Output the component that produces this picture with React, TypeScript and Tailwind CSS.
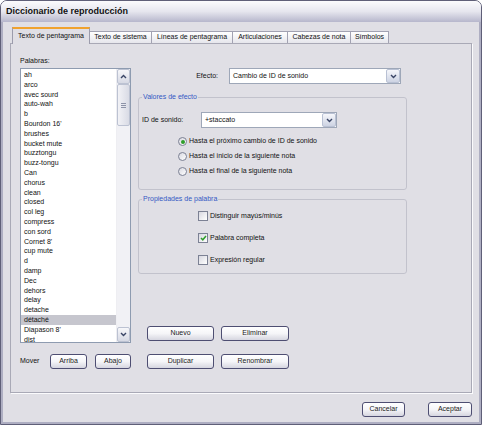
import React from 'react';

const WORDS = ['ah', 'arco', 'avec sourd', 'auto-wah', 'b', "Bourdon 16'", 'brushes', 'bucket mute', 'buzztongu', 'buzz-tongu', 'Can', 'chorus', 'clean', 'closed', 'col leg', 'compress', 'con sord', "Cornet 8'", 'cup mute', 'd', 'damp', 'Dec', 'dehors', 'delay', 'detache', 'détaché', "Diapason 8'", 'dist'];

const TABS: [string, string][] = [
  ['Texto de pentagrama', 'w-[78px]'],
  ['Texto de sistema', 'w-[62px]'],
  ['Líneas de pentagrama', 'w-[81px]'],
  ['Articulaciones', 'w-[55px]'],
  ['Cabezas de nota', 'w-[63px]'],
  ['Símbolos', 'w-[38px]'],
];

function Chevron({ up }: { up?: boolean }) {
  return (
    <svg width="7" height="5" viewBox="0 0 7 5">
      <path d={up ? 'M1 4L3.5 1.5L6 4' : 'M1 1L3.5 3.5L6 1'} fill="none" stroke="#3a4566" strokeWidth="1.4" />
    </svg>
  );
}

function Btn({ children, w }: { children: React.ReactNode; w: string }) {
  return (
    <div className={`${w} h-[15px] flex items-center justify-center rounded-[3px] border border-[#4e4e72] bg-gradient-to-b from-white via-[#f5f5f8] to-[#d6d6e0] text-[#222]`}>
      {children}
    </div>
  );
}

function Combo({ w, value }: { w: string; value: string }) {
  return (
    <div className={`${w} h-[16px] flex bg-white border border-[#9ea7b8]`}>
      <div className="flex-1 flex items-center pl-[3px]">{value}</div>
      <div className="w-[14px] flex items-center justify-center rounded-[2px] border border-[#b9c1d4] bg-gradient-to-b from-[#f6f7fb] to-[#cdd3e3]">
        <Chevron />
      </div>
    </div>
  );
}

function Radio({ on, label }: { on?: boolean; label: string }) {
  return (
    <div className="h-[15px] flex items-center gap-[2px]">
      <span className="w-[9px] h-[9px] rounded-full border border-[#7c8194] bg-gradient-to-br from-[#d8d8e0] to-white flex items-center justify-center">
        {on && <span className="w-[4px] h-[4px] rounded-full bg-[#2f9e2a]" />}
      </span>
      <span>{label}</span>
    </div>
  );
}

function Check({ on, label }: { on?: boolean; label: string }) {
  return (
    <div className="h-[22px] flex items-center gap-[2px]">
      <span className="w-[10px] h-[10px] border border-[#7c8194] bg-gradient-to-br from-[#d8d8e0] to-white flex items-center justify-center">
        {on && (
          <svg width="7" height="6" viewBox="0 0 7 6">
            <path d="M1 3L2.8 4.8L6 1" fill="none" stroke="#2f9e2a" strokeWidth="1.5" />
          </svg>
        )}
      </span>
      <span>{label}</span>
    </div>
  );
}

export default function App() {
  return (
    <div className="w-[482px] h-[425px] flex flex-col border border-[#5f5f78] rounded-t-[7px] overflow-hidden text-[7px] text-[#111] font-['Liberation_Sans',Arial,sans-serif]">
      <div className="h-[21px] shrink-0 flex items-center pl-[5px] bg-gradient-to-b from-[#fbfbfd] via-[#e6e6ee] to-[#b7b7cc]">
        <span className="text-[9px] font-bold text-[#111]">Diccionario de reproducción</span>
      </div>

      <div className="flex-1 flex flex-col border-x-2 border-b-2 border-[#aeaec2] bg-[#e0dfe5] px-[7px] pt-[5px]">
        {/* tabs */}
        <div className="h-[16px] flex items-end ml-[2px]">
          {TABS.map(([t, w], i) =>
            i === 0 ? (
              <div key={t} className={`${w} h-[17px] -mb-px relative z-10 flex items-center justify-center border-x border-t-2 border-x-[#9c9cac] border-t-[#f0a22e] bg-[#e0dfe5]`}>
                {t}
              </div>
            ) : (
              <div key={t} className={`${w} h-[12px] flex items-center justify-center border-t border-r border-[#a2a2b2] bg-gradient-to-b from-white to-[#e6e6ec]`}>
                {t}
              </div>
            )
          )}
        </div>

        {/* panel */}
        <div className="h-[350px] border border-[#a9a9b6] shadow-[1px_1px_0_#fbfbfd] flex gap-[7px] pl-[9px] pt-[10px]">
          {/* left column */}
          <div className="w-[111px] flex flex-col">
            <div className="h-[14px] flex items-center">Palabras:</div>
            <div className="h-[275px] flex bg-white border border-[#8e9bb0]">
              <div className="flex-1 overflow-hidden pt-[1px]">
                {WORDS.map((w) => (
                  <div key={w} className={`h-[9.8px] leading-[9.8px] pl-[3px] ${w === 'détaché' ? 'bg-[#c6c6ce]' : ''}`}>
                    {w}
                  </div>
                ))}
              </div>
              <div className="w-[14px] flex flex-col bg-[#f1f1f5] border-l border-[#eeeef2]">
                <div className="h-[15px] flex items-center justify-center rounded-[2px] border border-[#bcc2d2] bg-gradient-to-b from-[#f7f7fa] to-[#d6d9e4]">
                  <Chevron up />
                </div>
                <div className="h-[42px] flex items-center justify-center rounded-[2px] border border-[#bcc2d2] bg-gradient-to-r from-[#f2f2f6] to-[#d9dbe5]">
                  <div className="flex flex-col gap-[1px]">
                    <span className="w-[5px] h-px bg-[#8d93a8]" />
                    <span className="w-[5px] h-px bg-[#8d93a8]" />
                    <span className="w-[5px] h-px bg-[#8d93a8]" />
                  </div>
                </div>
                <div className="flex-1" />
                <div className="h-[15px] flex items-center justify-center rounded-[2px] border border-[#bcc2d2] bg-gradient-to-b from-[#f7f7fa] to-[#d6d9e4]">
                  <Chevron />
                </div>
              </div>
            </div>
            <div className="mt-[11px] h-[15px] flex items-center">
              <span className="w-[30px]">Mover</span>
              <Btn w="w-[37px]">Arriba</Btn>
              <span className="w-[8px]" />
              <Btn w="w-[36px]">Abajo</Btn>
            </div>
          </div>

          {/* right column */}
          <div className="w-[269px] flex flex-col pt-[14px]">
            <div className="h-[16px] flex items-center">
              <span className="w-[80px] text-right">Efecto:</span>
              <span className="w-[11px]" />
              <Combo w="w-[172px]" value="Cambio de ID de sonido" />
            </div>

            <fieldset className="mt-[8px] h-[98px] border border-[#c2c2cc] rounded-[3px]">
              <legend className="ml-[3px] px-px leading-[10px] text-[#3559c4]">Valores de efecto</legend>
              <div className="pl-[3px]">
                <div className="mt-[10px] h-[16px] flex items-center">
                  <span className="w-[59px]">ID de sonido:</span>
                  <Combo w="w-[136px]" value="+staccato" />
                </div>
                <div className="mt-[6px] pl-[36px]">
                  <Radio on label="Hasta el próximo cambio de ID de sonido" />
                  <Radio label="Hasta el inicio de la siguiente nota" />
                  <Radio label="Hasta el final de la siguiente nota" />
                </div>
              </div>
            </fieldset>

            <fieldset className="mt-[4px] h-[80px] border border-[#c2c2cc] rounded-[3px]">
              <legend className="ml-[3px] px-px leading-[10px] text-[#3559c4]">Propiedades de palabra</legend>
              <div className="pt-px pl-[59px]">
                <Check label="Distinguir mayús/minús" />
                <Check on label="Palabra completa" />
                <Check label="Expresión regular" />
              </div>
            </fieldset>

            <div className="mt-[52px] pl-[9px] flex gap-[7px]">
              <Btn w="w-[67px]">Nuevo</Btn>
              <Btn w="w-[68px]">Eliminar</Btn>
            </div>
            <div className="mt-[13px] pl-[9px] flex gap-[7px]">
              <Btn w="w-[67px]">Duplicar</Btn>
              <Btn w="w-[68px]">Renombrar</Btn>
            </div>
          </div>
        </div>

        {/* dialog buttons */}
        <div className="mt-[9px] flex justify-end gap-[23px]">
          <Btn w="w-[43px]">Cancelar</Btn>
          <Btn w="w-[44px]">Aceptar</Btn>
        </div>
      </div>
    </div>
  );
}
